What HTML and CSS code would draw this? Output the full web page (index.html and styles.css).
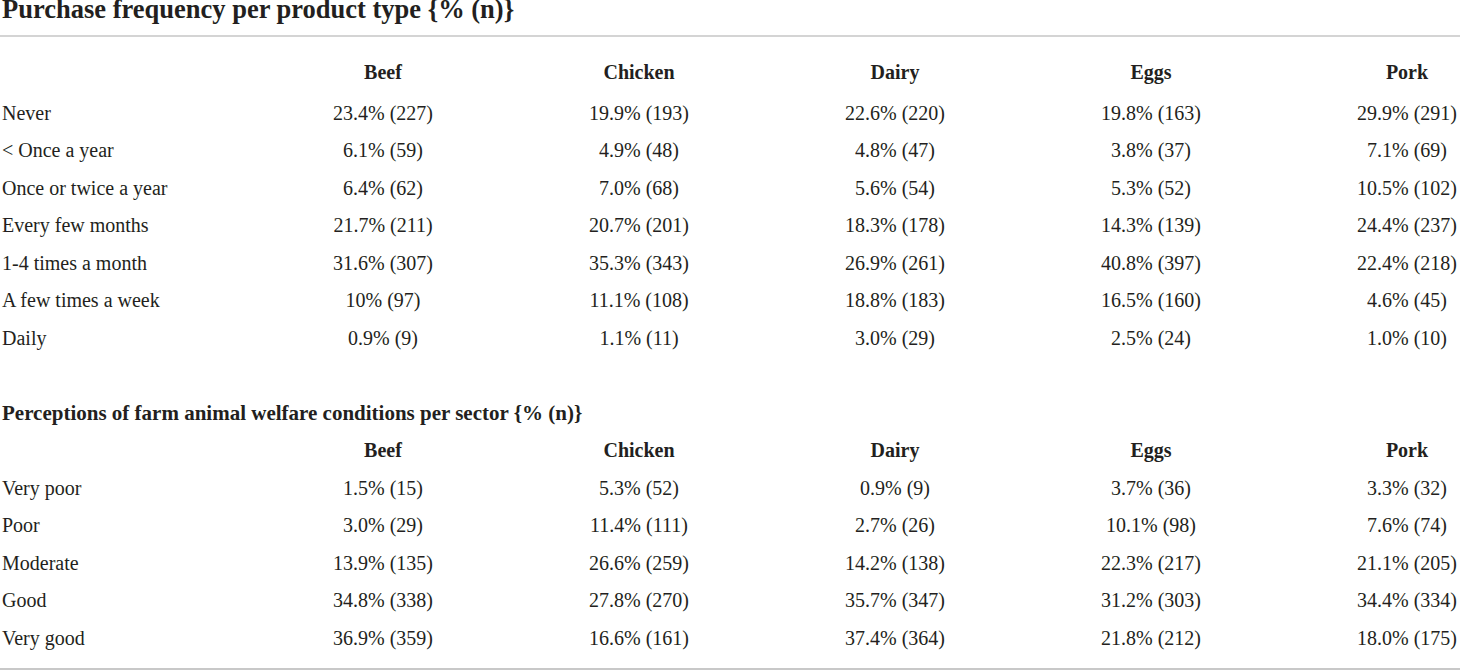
FILE: index.html
```html
<!DOCTYPE html>
<html lang="en">
<head>
    <meta charset="UTF-8">
    <meta name="viewport" content="width=device-width, initial-scale=1.0">
    <title>Purchase frequency and welfare perceptions</title>
    <link rel="stylesheet" href="styles.css">
</head>
<body>
    <div class="page">
        <h1 class="caption">Purchase frequency per product type {% (n)}</h1>

        <div class="table">
            <div class="row head">
                <span></span><span>Beef</span><span>Chicken</span><span>Dairy</span><span>Eggs</span><span>Pork</span>
            </div>
            <div class="row first">
                <span class="label">Never</span><span>23.4% (227)</span><span>19.9% (193)</span><span>22.6% (220)</span><span>19.8% (163)</span><span>29.9% (291)</span>
            </div>
            <div class="row">
                <span class="label">&lt; Once a year</span><span>6.1% (59)</span><span>4.9% (48)</span><span>4.8% (47)</span><span>3.8% (37)</span><span>7.1% (69)</span>
            </div>
            <div class="row">
                <span class="label">Once or twice a year</span><span>6.4% (62)</span><span>7.0% (68)</span><span>5.6% (54)</span><span>5.3% (52)</span><span>10.5% (102)</span>
            </div>
            <div class="row">
                <span class="label">Every few months</span><span>21.7% (211)</span><span>20.7% (201)</span><span>18.3% (178)</span><span>14.3% (139)</span><span>24.4% (237)</span>
            </div>
            <div class="row">
                <span class="label">1-4 times a month</span><span>31.6% (307)</span><span>35.3% (343)</span><span>26.9% (261)</span><span>40.8% (397)</span><span>22.4% (218)</span>
            </div>
            <div class="row">
                <span class="label">A few times a week</span><span>10% (97)</span><span>11.1% (108)</span><span>18.8% (183)</span><span>16.5% (160)</span><span>4.6% (45)</span>
            </div>
            <div class="row">
                <span class="label">Daily</span><span>0.9% (9)</span><span>1.1% (11)</span><span>3.0% (29)</span><span>2.5% (24)</span><span>1.0% (10)</span>
            </div>
        </div>

        <div class="table second">
            <div class="row section">
                <span class="subhead">Perceptions of farm animal welfare conditions per sector {% (n)}</span>
            </div>
            <div class="row head">
                <span></span><span>Beef</span><span>Chicken</span><span>Dairy</span><span>Eggs</span><span>Pork</span>
            </div>
            <div class="row">
                <span class="label">Very poor</span><span>1.5% (15)</span><span>5.3% (52)</span><span>0.9% (9)</span><span>3.7% (36)</span><span>3.3% (32)</span>
            </div>
            <div class="row">
                <span class="label">Poor</span><span>3.0% (29)</span><span>11.4% (111)</span><span>2.7% (26)</span><span>10.1% (98)</span><span>7.6% (74)</span>
            </div>
            <div class="row">
                <span class="label">Moderate</span><span>13.9% (135)</span><span>26.6% (259)</span><span>14.2% (138)</span><span>22.3% (217)</span><span>21.1% (205)</span>
            </div>
            <div class="row">
                <span class="label">Good</span><span>34.8% (338)</span><span>27.8% (270)</span><span>35.7% (347)</span><span>31.2% (303)</span><span>34.4% (334)</span>
            </div>
            <div class="row">
                <span class="label">Very good</span><span>36.9% (359)</span><span>16.6% (161)</span><span>37.4% (364)</span><span>21.8% (212)</span><span>18.0% (175)</span>
            </div>
        </div>
    </div>
</body>
</html>
```

FILE: styles.css
```css
* {
    margin: 0;
    padding: 0;
    box-sizing: border-box;
}

body {
    font-family: "Liberation Serif", "Times New Roman", serif;
    color: #231f20;
    background: #ffffff;
    overflow: hidden;
}

.page {
    width: 1460px;
    overflow: hidden;
    border-bottom: 2px solid #c8c8c8;
    padding-bottom: 11px;
}

/* the caption sits flush with the top edge, as in the source */
.caption {
    font-size: 26.5px;
    font-weight: bold;
    line-height: 18.5px;
    padding: 0 0 16.5px 2px;
    border-bottom: 2px solid #d4d4d4;
    white-space: nowrap;
}

.table {
    padding-top: 17px;
}

.table.second {
    padding-top: 37.5px;
}

.row {
    display: grid;
    grid-template-columns: 255px repeat(5, 256px);
    align-items: center;
    height: 37.5px;
    font-size: 20px;
    white-space: nowrap;
}

.row span {
    text-align: center;
}

.row .label {
    text-align: left;
    padding-left: 2px;
}

.row.head {
    font-weight: bold;
}

.row.first {
    margin-top: 3px;
}

.row.section .subhead {
    grid-column: 1 / -1;
    text-align: left;
    padding-left: 2px;
    font-weight: bold;
    font-size: 21px;
}
```
